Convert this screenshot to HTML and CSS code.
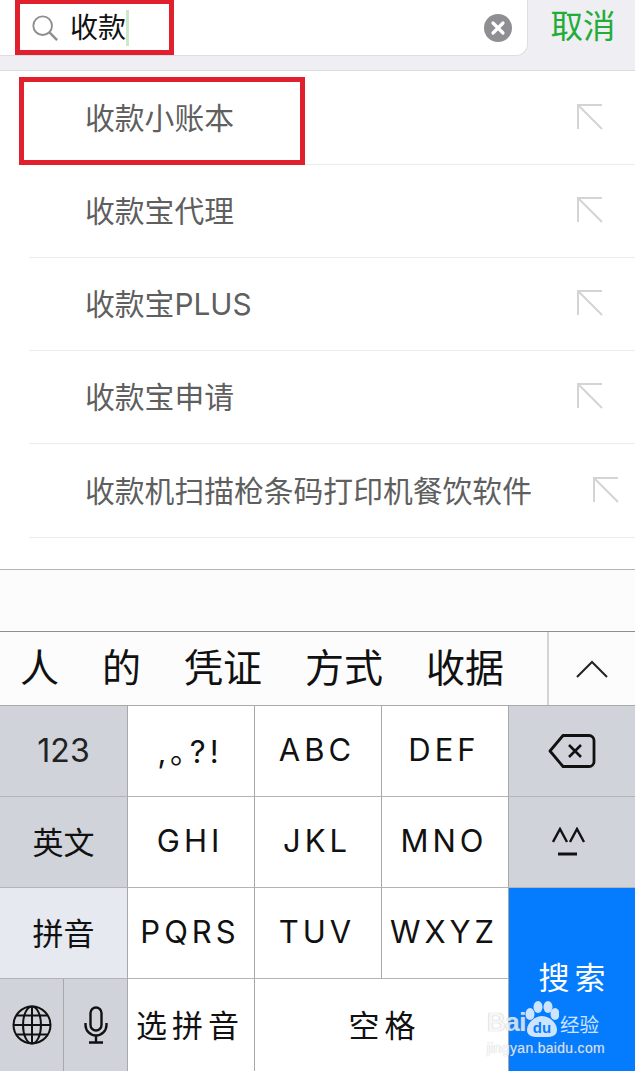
FILE: index.html
```html
<!DOCTYPE html>
<html lang="zh-CN">
<head>
  <meta charset="UTF-8" />
  <meta name="viewport" content="width=device-width, initial-scale=1.0" />
  <title>搜索</title>
  <link rel="stylesheet" href="styles.css">
</head>
<body>
  <div class="phone">
    <div class="search-bar">
      <div class="search-input">
        <svg class="search-icon" width="28" height="28" viewBox="0 0 30 30">
          <circle cx="12.5" cy="12.5" r="10" fill="none" stroke="#8e8e8e" stroke-width="2"/>
          <path d="M20 20L28 28" stroke="#8e8e8e" stroke-width="2.6" fill="none"/>
        </svg>
        <span class="search-text">收款</span><span class="caret"></span>
        <svg class="clear-icon" width="28" height="28" viewBox="0 0 28 28">
          <circle cx="14" cy="14" r="14" fill="#8e8e93"/>
          <path d="M9 9L19 19M19 9L9 19" stroke="#fff" stroke-width="3.2" stroke-linecap="round"/>
        </svg>
      </div>
      <div class="cancel">取消</div>
    </div>

    <ul class="suggestions">
      <li class="row"><span class="row-text">收款小账本</span><svg class="arrow" width="28" height="28" viewBox="0 0 28 28"><path d="M26 1H2V25M2 1L26 25" fill="none" stroke="#d4d4d4" stroke-width="2"/></svg></li>
      <li class="row"><span class="row-text">收款宝代理</span><svg class="arrow" width="28" height="28" viewBox="0 0 28 28"><path d="M26 1H2V25M2 1L26 25" fill="none" stroke="#d4d4d4" stroke-width="2"/></svg></li>
      <li class="row"><span class="row-text">收款宝PLUS</span><svg class="arrow" width="28" height="28" viewBox="0 0 28 28"><path d="M26 1H2V25M2 1L26 25" fill="none" stroke="#d4d4d4" stroke-width="2"/></svg></li>
      <li class="row"><span class="row-text">收款宝申请</span><svg class="arrow" width="28" height="28" viewBox="0 0 28 28"><path d="M26 1H2V25M2 1L26 25" fill="none" stroke="#d4d4d4" stroke-width="2"/></svg></li>
      <li class="row row-long"><span class="row-text">收款机扫描枪条码打印机餐饮软件</span><svg class="arrow" width="28" height="28" viewBox="0 0 28 28"><path d="M26 1H2V25M2 1L26 25" fill="none" stroke="#d4d4d4" stroke-width="2"/></svg></li>
    </ul>

    <div class="spacer"></div>
    <div class="compose"></div>

    <div class="candidates">
      <div class="candidate-list">
        <span>人</span><span>的</span><span>凭证</span><span>方式</span><span>收据</span>
      </div>
      <div class="expand">
        <svg width="34" height="18" viewBox="0 0 34 18"><path d="M2 17L17 2L32 17" fill="none" stroke="#222" stroke-width="2"/></svg>
      </div>
    </div>

    <div class="keyboard">
      <div class="key dark num">123</div>
      <div class="key wide">,｡?!</div>
      <div class="key wide">ABC</div>
      <div class="key wide">DEF</div>
      <div class="key dark icon-key">
        <svg width="48" height="34" viewBox="0 0 48 34">
          <path d="M15 1.5H41a5 5 0 0 1 5 5V27.5a5 5 0 0 1-5 5H15L2 17Z" fill="none" stroke="#111" stroke-width="2.8" stroke-linejoin="round"/>
          <path d="M21 11L33 23M33 11L21 23" stroke="#111" stroke-width="2.6"/>
        </svg>
      </div>

      <div class="key dark">英文</div>
      <div class="key wide">GHI</div>
      <div class="key wide">JKL</div>
      <div class="key wide">MNO</div>
      <div class="key dark icon-key">
        <svg class="shift-icon" width="34" height="30" viewBox="0 0 34 30">
          <path d="M1 15L8 2L15 15M18 15L25 2L32 15" fill="none" stroke="#111" stroke-width="2.4"/>
          <path d="M6 27H25" stroke="#111" stroke-width="3"/>
        </svg>
      </div>

      <div class="key light">拼音</div>
      <div class="key wide">PQRS</div>
      <div class="key wide">TUV</div>
      <div class="key wide">WXYZ</div>
      <div class="key search-key">搜索</div>

      <div class="key-split">
        <div class="key dark icon-key">
          <svg width="40" height="40" viewBox="0 0 40 40" fill="none" stroke="#111" stroke-width="2">
            <circle cx="20" cy="20" r="18.5"/>
            <ellipse cx="20" cy="20" rx="9" ry="18.5"/>
            <path d="M20 1.5V38.5M1.5 20H38.5M4.5 10.5H35.5M4.5 29.5H35.5"/>
          </svg>
        </div>
        <div class="key dark icon-key">
          <svg width="24" height="38" viewBox="0 0 24 38" fill="none" stroke="#111" stroke-width="2.4">
            <rect x="6.5" y="1.5" width="11" height="23" rx="5.5"/>
            <path d="M1.5 17V19a10.5 10.5 0 0 0 21 0V17M12 30V36M5 36.5H19"/>
          </svg>
        </div>
      </div>
      <div class="key wide cn">选拼音</div>
      <div class="key key-space wide cn">空格</div>
    </div>

    <div class="mark mark-top"></div>
    <div class="mark mark-row"></div>

    <div class="watermark">
      <div class="wm-logo">
        <span class="wm-bai">Bai</span>
        <svg width="34" height="36" viewBox="0 0 34 36" fill="#fff">
          <ellipse cx="5" cy="13" rx="4.5" ry="6"/>
          <ellipse cx="13" cy="6" rx="4.5" ry="6"/>
          <ellipse cx="23" cy="6" rx="4.5" ry="6"/>
          <ellipse cx="30" cy="13" rx="4.5" ry="6"/>
          <path d="M17 15c6 0 15 6 15 14 0 7-7 7-15 7s-15 0-15-7c0-8 9-14 15-14Z"/>
          <text x="17" y="32" text-anchor="middle" class="wm-du">du</text>
        </svg>
        <span class="wm-cn">经验</span>
      </div>
      <div class="wm-url">jingyan.baidu.com</div>
    </div>
  </div>
</body>
</html>
```

FILE: styles.css
```css
* {
  box-sizing: border-box;
}
body {
  margin: 0;
  background: #fff;
  font-family: "Liberation Sans", "Noto Sans CJK SC", sans-serif;
}
.phone {
  position: relative;
  width: 635px;
  height: 1071px;
  overflow: hidden;
  font-family: "Inter", "Noto Sans CJK SC", sans-serif;
}

/* search bar */
.search-bar {
  display: flex;
  align-items: flex-start;
  height: 71px;
  background: #eeeef3;
  border-bottom: 1px solid #dcdce0;
}
.search-input {
  display: flex;
  align-items: center;
  width: 532px;
  height: 56px;
  margin-left: -4px;
  padding: 0 15px 0 34px;
  background: #fff;
  border: 1px solid #dedee2;
  border-top: 0;
  border-radius: 0 0 12px 0;
}
.search-icon {
  flex: none;
  margin-right: 11px;
}
.search-text {
  margin-bottom: 3px;
  font-size: 28px;
  color: #111;
}
.caret {
  width: 3px;
  height: 36px;
  background: #cbe8c9;
}
.clear-icon {
  flex: none;
  margin-left: auto;
}
.cancel {
  flex: 1;
  padding: 6px 0 0 3px;
  text-align: center;
  font-size: 32.5px;
  line-height: 42px;
  color: #22ac38;
}

/* suggestion list */
.suggestions {
  margin: 0;
  padding: 0;
  list-style: none;
  background: #fff;
}
.row {
  display: flex;
  align-items: center;
  justify-content: space-between;
  height: 93px;
  margin-left: 29px;
  padding: 0 31px 0 56px;
  border-bottom: 1px solid #ececec;
  font-size: 29.8px;
  color: #5f5f5f;
}
.row-text {
  margin-bottom: 4px;
}
.row:first-child {
  height: 94px;
}
.row-long {
  height: 94px;
  padding-right: 15px;
}
.spacer {
  height: 32px;
  background: #fff;
  border-bottom: 1px solid #b5b5b5;
}
.compose {
  height: 62px;
  background: #fcfcfd;
  border-bottom: 1px solid #8f8f8f;
}

/* candidates */
.candidates {
  display: flex;
  height: 74px;
  background: #fcfcfd;
  border-bottom: 1px solid #a9a9a9;
}
.candidate-list {
  flex: 1;
  display: flex;
  align-items: center;
  gap: 43px;
  padding: 0 0 7px 20px;
  font-size: 39px;
  color: #111;
}
.expand {
  width: 88px;
  display: flex;
  align-items: center;
  justify-content: center;
  border-left: 2px solid #d5d5d5;
}

/* keyboard */
.keyboard {
  display: grid;
  grid-template-columns: 128px 127px 127px 127px 126px;
  grid-template-rows: 91px 91px 91px 92px;
  height: 365px;
  background: #fff;
}
.key {
  display: flex;
  align-items: center;
  justify-content: center;
  padding-bottom: 4px;
  border-right: 1px solid #a8a8a8;
  border-bottom: 1px solid #b4b4b4;
  font-size: 31px;
  color: #111;
  background: #fff;
}
.icon-key {
  padding-bottom: 0;
}
.num {
  padding-bottom: 1px;
  font-size: 32px;
  color: #222;
}
.wide {
  padding-right: 2px;
  letter-spacing: 4px;
}
.cn {
  letter-spacing: 5px;
}
.dark {
  background: #d0d3d9;
}
.light {
  background: #e6e9ef;
}
.key:nth-child(5),
.key:nth-child(10) {
  border-right: 0;
}
.shift-icon {
  margin-right: 6px;
}
.search-key {
  grid-column: 5;
  grid-row: 3 / span 2;
  padding: 0 0 8px 5px;
  border: 0;
  background: #057cfe;
  color: #fff;
  font-size: 31px;
  letter-spacing: 5px;
}
.key-split {
  display: grid;
  grid-template-columns: 64px 64px;
}
.key-split .key {
  border-bottom: 0;
}
.key-space {
  grid-column: 3 / span 2;
  padding: 0 0 4px 6px;
}
.keyboard > .key:nth-last-child(-n+2) {
  border-bottom: 0;
}

/* red marks drawn over the screenshot */
.mark {
  position: absolute;
  border: 5px solid #e0202c;
}
.mark-top {
  left: 15px;
  top: -1px;
  width: 159px;
  height: 56px;
}
.mark-row {
  left: 19px;
  top: 77px;
  width: 286px;
  height: 88px;
}

/* watermark */
.watermark {
  position: absolute;
  left: 487px;
  top: 1001px;
  color: #fff;
  opacity: 0.8;
}
.wm-logo {
  display: flex;
  align-items: flex-end;
}
.wm-bai {
  width: 38px;
  font-family: "Liberation Sans", sans-serif;
  font-size: 26px;
  font-weight: bold;
  line-height: 30px;
  letter-spacing: -0.5px;
  color: #f4f4f4;
  text-shadow: 0 0 1px #999;
}
.wm-du {
  font-family: "Liberation Sans", sans-serif;
  font-size: 15px;
  font-weight: bold;
  fill: #057cfe;
}
.wm-cn {
  margin-left: 1px;
  font-size: 19.5px;
  line-height: 24px;
}
.wm-url {
  margin-top: 3px;
  font-family: "Liberation Sans", sans-serif;
  font-size: 14px;
  line-height: 16px;
  letter-spacing: 0.3px;
  color: #fff;
  text-shadow: 0 0 1px #999;
}
```
